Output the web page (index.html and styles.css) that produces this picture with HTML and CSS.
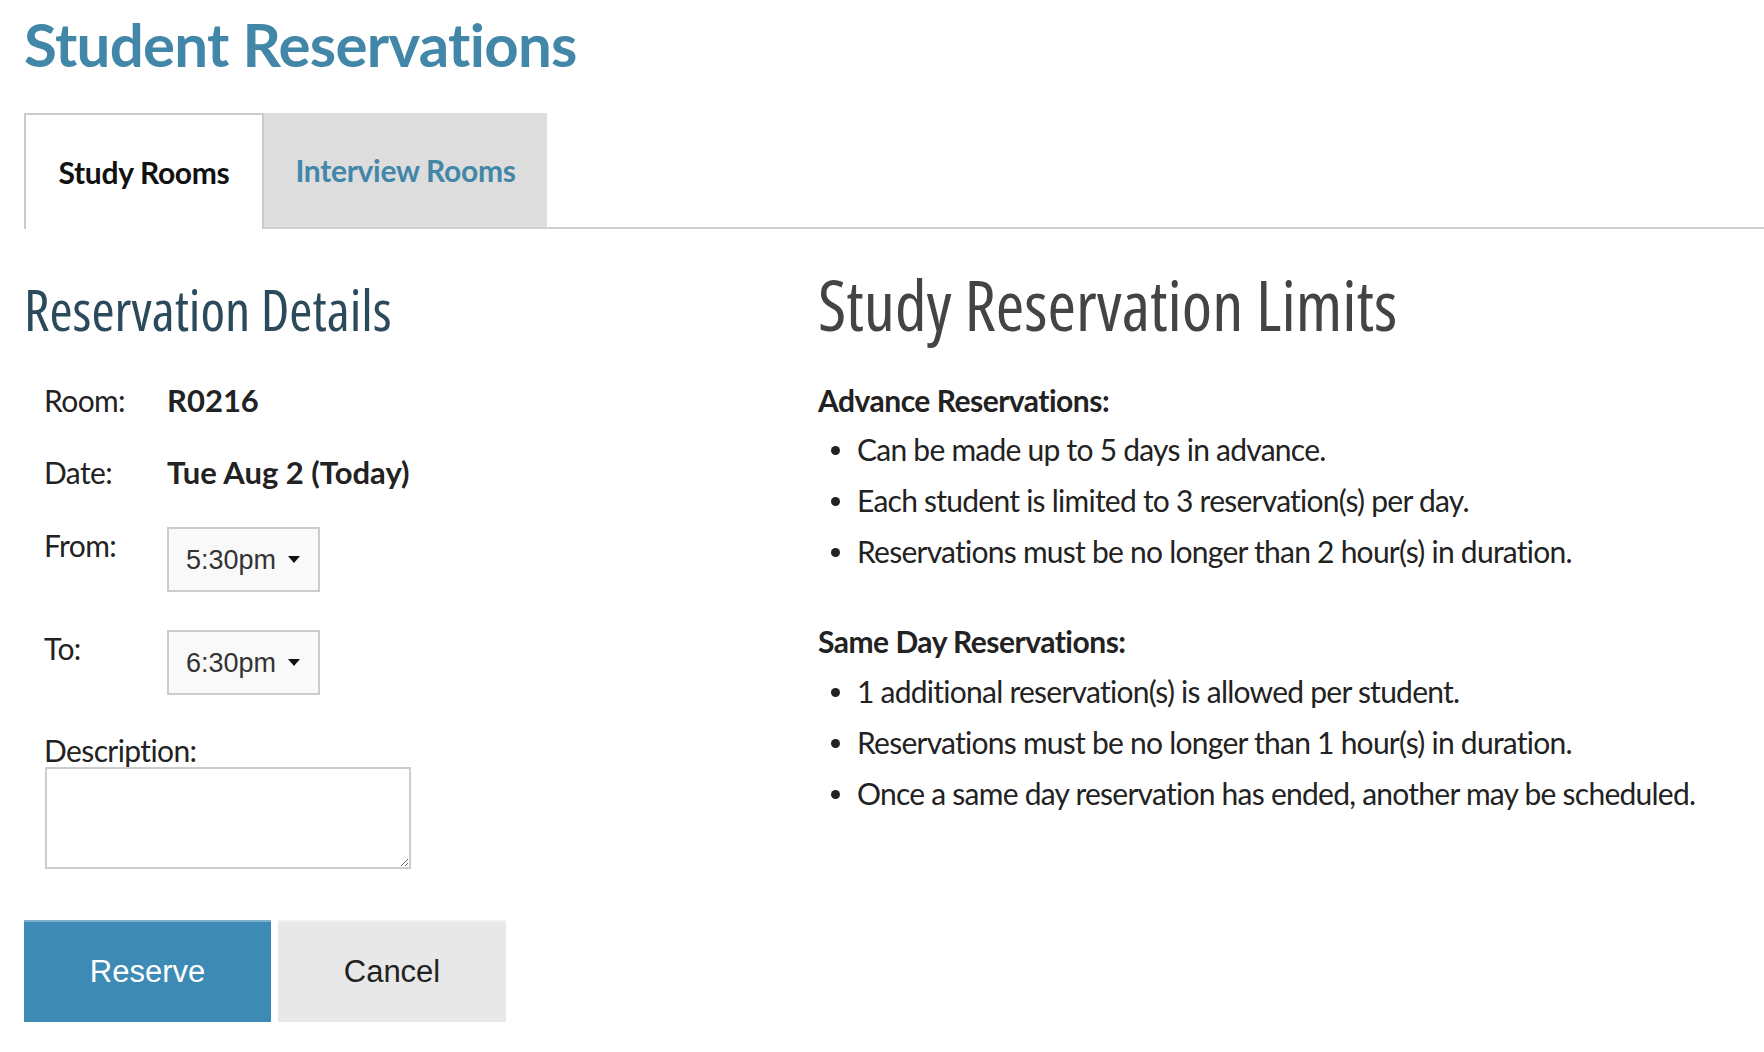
FILE: index.html
```html
<!DOCTYPE html>
<html>
<head>
<meta charset="utf-8">
<link rel="stylesheet" href="styles.css">
</head>
<body>
<div class="page">
  <h1 class="title">Student Reservations</h1>
  <div class="tabs">
    <div class="tab active">Study Rooms</div>
    <div class="tab">Interview Rooms</div>
  </div>
  <div class="content">
    <section class="details">
      <h2 class="details-title">Reservation Details</h2>
      <div class="row first"><span class="label">Room:</span><span class="value">R0216</span></div>
      <div class="row"><span class="label">Date:</span><span class="value">Tue Aug 2 (Today)</span></div>
      <div class="row sel-row"><span class="label">From:</span><div class="select">5:30pm<span class="caret"></span></div></div>
      <div class="row sel-row to"><span class="label">To:</span><div class="select">6:30pm<span class="caret"></span></div></div>
      <div class="desc-label">Description:</div>
      <textarea class="desc"></textarea>
      <div class="buttons">
        <button class="btn primary">Reserve</button>
        <button class="btn secondary">Cancel</button>
      </div>
    </section>
    <section class="limits">
      <h2 class="limits-title">Study Reservation Limits</h2>
      <div class="group-title">Advance Reservations:</div>
      <ul class="list">
        <li>Can be made up to 5 days in advance.</li>
        <li>Each student is limited to 3 reservation(s) per day.</li>
        <li>Reservations must be no longer than 2 hour(s) in duration.</li>
      </ul>
      <div class="group-title second">Same Day Reservations:</div>
      <ul class="list">
        <li>1 additional reservation(s) is allowed per student.</li>
        <li>Reservations must be no longer than 1 hour(s) in duration.</li>
        <li>Once a same day reservation has ended, another may be scheduled.</li>
      </ul>
    </section>
  </div>
</div>
</body>
</html>
```

FILE: styles.css
```css
html, body { margin: 0; padding: 0; background: #fff; }
body { font-family: Lato, "Open Sans", sans-serif; color: #222; }
.page { padding: 0 0 0 24px; }

.title {
  margin: 0; padding-top: 6px;
  font-size: 60px; line-height: 76px; font-weight: 700;
  color: #4286a8; letter-spacing: -0.7px;
}

.tabs {
  display: flex; margin-top: 31px; height: 114px;
  border-bottom: 2px solid #d0d0d0;
}
.tab {
  display: flex; align-items: center; justify-content: center;
  font-size: 30px; line-height: 36px; font-weight: 700; letter-spacing: -0.3px;
  color: #4286a8; background: #dddddd; width: 283px; box-sizing: border-box;
}
.tab.active {
  background: #fff; color: #111; width: 240px; height: 116px;
  border: 2px solid #cacaca; border-bottom: none;
}

.content { display: grid; grid-template-columns: 794px 1fr; align-items: start; }

.details-title, .limits-title {
  margin: 0; font-family: "Open Sans", sans-serif; font-weight: 400;
  font-stretch: 75%;
}
.details-title {
  color: #2b4a5b; font-size: 56px; line-height: 76px; margin-top: 42px;
}
.limits-title {
  color: #444; font-size: 69px; line-height: 94px; margin-top: 28px;
}

.row {
  display: flex; align-items: baseline; padding-left: 20px;
  font-size: 30px; line-height: 36px; letter-spacing: -0.6px; margin-top: 36px;
}
.row.first { margin-top: 35px; }
.row.sel-row { align-items: flex-start; margin-top: 37px; }
.row.sel-row.to { margin-top: 38px; }
.label { width: 123px; flex: none; }
.value { font-weight: 700; font-size: 31px; letter-spacing: 0; }

.select {
  width: 153px; height: 65px; box-sizing: border-box; border: 2px solid #cccccc;
  background: #f9f9f9; font-family: "Liberation Sans", Arial, sans-serif;
  font-size: 27px; letter-spacing: 0; color: #333;
  display: flex; align-items: center; padding-left: 17px;
}
.caret {
  margin-left: 12px; width: 0; height: 0;
  border-left: 6px solid transparent; border-right: 6px solid transparent;
  border-top: 7px solid #111;
}

.desc-label {
  padding-left: 20px; font-size: 30px; line-height: 31px;
  letter-spacing: -0.6px; margin-top: 40px;
}
.desc {
  display: block; margin: 1px 0 0 21px; width: 366px; height: 102px;
  box-sizing: border-box; border: 2px solid #cccccc; background: #fff;
}

.buttons { display: flex; gap: 7px; margin-top: 51px; }
.btn {
  border: none; height: 102px; padding: 0; margin: 0;
  font-family: "Liberation Sans", Arial, sans-serif; font-size: 31px;
}
.btn.primary {
  width: 247px; background: #3d8ab5; color: #fff; border-top: 2px solid #7fb1cf;
}
.btn.secondary {
  width: 228px; background: #e8e8e8; color: #222; border-top: 2px solid #f1f1f1;
}

.group-title {
  font-weight: 700; font-size: 30px; line-height: 36px;
  letter-spacing: -0.5px; margin-top: 31px;
}
.group-title.second { margin-top: 46px; }
.list {
  list-style: none; margin: 6px 0 0 0; padding: 0 0 0 39px;
  font-size: 30px; line-height: 51px; letter-spacing: -0.75px;
}
.group-title.second + .list { margin-top: 7px; }
.list li { position: relative; }
.list li::before {
  content: ""; position: absolute; left: -26px; top: 22px;
  width: 9px; height: 9px; border-radius: 50%; background: #222;
}
```
